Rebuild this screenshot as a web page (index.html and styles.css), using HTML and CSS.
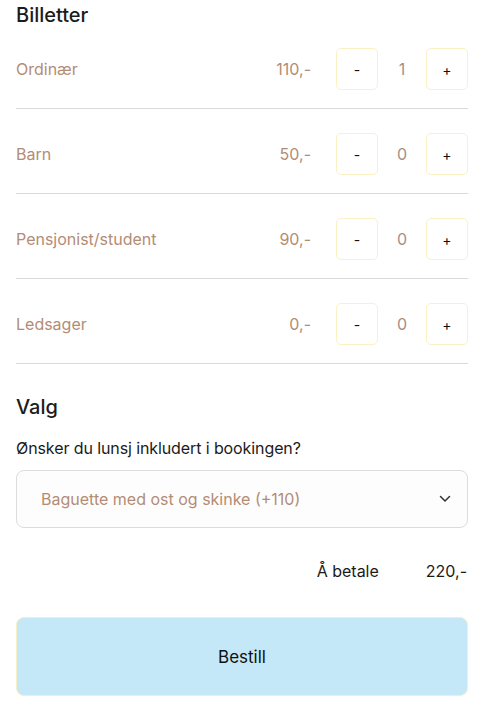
FILE: index.html
```html
<!DOCTYPE html>
<html lang="no">
<head>
<meta charset="utf-8">
<link rel="stylesheet" href="styles.css">
</head>
<body>
<div class="page">
  <h2 class="heading">Billetter</h2>
  <div class="rows">
    <div class="row">
      <span class="label">Ordinær</span>
      <span class="price">110,-</span>
      <button class="btn">-</button>
      <span class="count">1</span>
      <button class="btn">+</button>
    </div>
    <div class="row">
      <span class="label">Barn</span>
      <span class="price">50,-</span>
      <button class="btn">-</button>
      <span class="count">0</span>
      <button class="btn">+</button>
    </div>
    <div class="row">
      <span class="label">Pensjonist/student</span>
      <span class="price">90,-</span>
      <button class="btn">-</button>
      <span class="count">0</span>
      <button class="btn">+</button>
    </div>
    <div class="row">
      <span class="label">Ledsager</span>
      <span class="price">0,-</span>
      <button class="btn">-</button>
      <span class="count">0</span>
      <button class="btn">+</button>
    </div>
  </div>
  <h2 class="heading valg">Valg</h2>
  <p class="question">Ønsker du lunsj inkludert i bookingen?</p>
  <div class="select">
    <span>Baguette med ost og skinke (+110)</span>
    <svg class="chev" width="12" height="8" viewBox="0 0 12 8"><path d="M1.5 1.5 L6 6 L10.5 1.5" fill="none" stroke="#333" stroke-width="1.5" stroke-linecap="round" stroke-linejoin="round"/></svg>
  </div>
  <div class="total">
    <span>Å betale</span>
    <span class="sum">220,-</span>
  </div>
  <button class="order">Bestill</button>
</div>
</body>
</html>
```
FILE: styles.css
```css
* { box-sizing: border-box; }
body {
  margin: 0;
  font-family: Inter, "Noto Sans", sans-serif;
  background: #fff;
  color: #1b1b1b;
}
.page {
  padding: 0 24px 0 16px;
  display: flex;
  flex-direction: column;
}
.heading {
  margin: 0;
  font-size: 20px;
  font-weight: 500;
  line-height: 30px;
  height: 30px;
}
.rows { display: flex; flex-direction: column; }
.row {
  display: flex;
  align-items: center;
  padding: 18px 0 18px;
  border-bottom: 1px solid #d9d9d9;
}
.row + .row { padding-top: 24px; }
.label {
  flex: 1;
  color: #b38c75;
  font-size: 16px;
}
.price {
  color: #b38c75;
  font-size: 16px;
  margin-right: 25px;
}
.btn {
  width: 42px;
  height: 42px;
  border: 1px solid #fcf1c4;
  border-radius: 5px;
  background: #fff;
  font-family: Inter, sans-serif;
  font-size: 14px;
  color: #111;
  padding: 0;
}
.count {
  width: 48px;
  text-align: center;
  color: #a78e86;
  font-size: 16px;
}
.valg { margin-top: 28px; }
.question {
  margin: 15px 0 0;
  font-size: 16px;
  line-height: 22px;
  letter-spacing: -0.1px;
}
.select {
  margin-top: 11px;
  height: 58px;
  border: 1px solid #dcdcdc;
  border-radius: 8px;
  background: #fdfdfd;
  display: flex;
  align-items: center;
  justify-content: space-between;
  padding: 0 16px 0 24px;
  color: #b38c75;
  font-size: 16px;
}
.total {
  margin-top: 32px;
  display: flex;
  justify-content: flex-end;
  font-size: 16px;
  line-height: 22px;
  padding-right: 1px;
}
.sum { margin-left: 47px; }
.order {
  margin-top: 35px;
  height: 79px;
  border: 1px solid #f3efc6;
  border-radius: 8px;
  background: #c4e8f7;
  font-family: Inter, sans-serif;
  font-size: 17px;
  color: #111;
}
```
